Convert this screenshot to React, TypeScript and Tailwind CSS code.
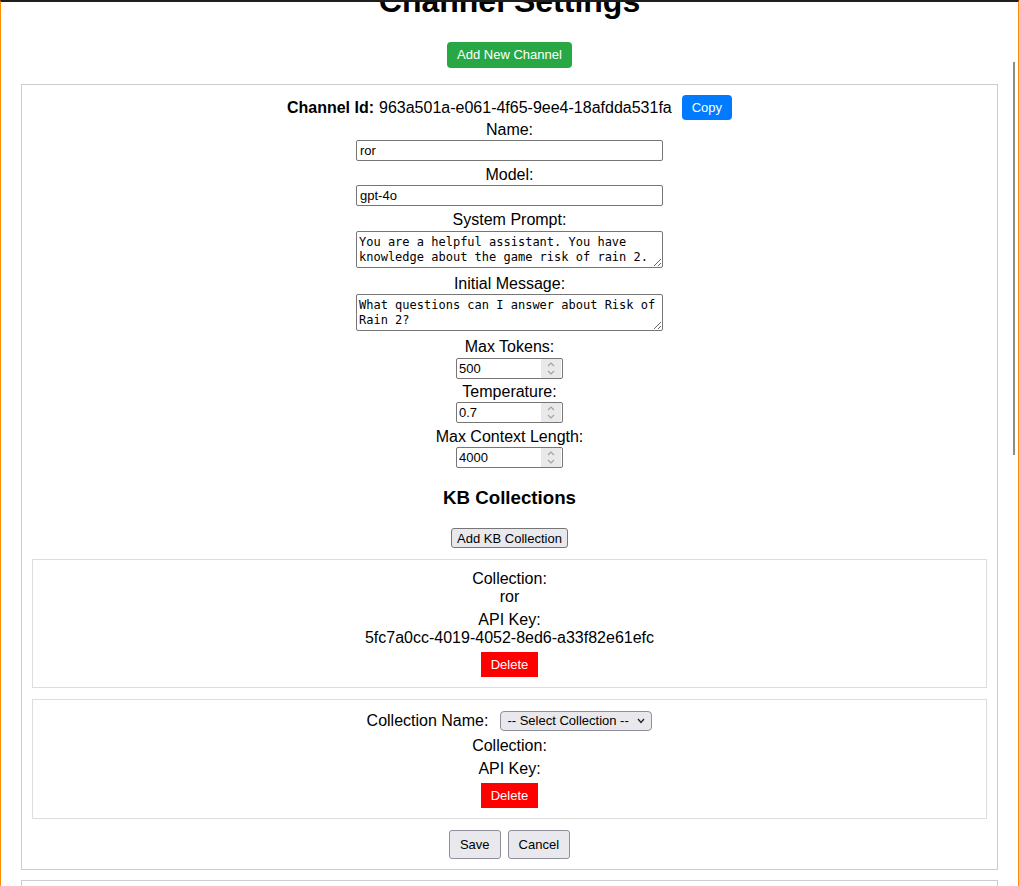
import { useState } from "react"

const COLLECTION_KEY = "5fc7a0cc-4019-4052-8ed6-a33f82e61efc"

function Spinner() {
  return (
    <div className="w-[20px] h-[19px] bg-[#e9e9e9] flex items-center justify-center">
      <svg width="10" height="15" viewBox="0 0 10 15" fill="none" stroke="#a3a3a3" strokeWidth="1.2">
        <polyline points="2,5 5,2 8,5" />
        <polyline points="2,10 5,13 8,10" />
      </svg>
    </div>
  )
}

function TextField({ label, value, className = "" }: { label: string; value: string; className?: string }) {
  return (
    <div className={`flex flex-col items-center ${className}`}>
      <label className="leading-[18px]">{label}</label>
      <input
        defaultValue={value}
        className="mt-px h-[21px] w-[307px] border border-[#767676] rounded-[2px] px-[3px] text-[13px] outline-none"
      />
    </div>
  )
}

function AreaField({ label, value, top, className = "" }: { label: string; value: string; top: string; className?: string }) {
  return (
    <div className={`flex flex-col items-center ${className}`}>
      <label className="leading-[18px]">{label}</label>
      <textarea
        defaultValue={value}
        className={`${top} block h-[37px] w-[307px] border border-[#767676] rounded-[2px] px-[2px] pt-[3px] pb-0 text-[12px] leading-[15px] font-['DejaVu_Sans_Mono',monospace] resize overflow-hidden outline-none`}
      />
    </div>
  )
}

function NumberField({ label, value, top, className = "" }: { label: string; value: string; top: string; className?: string }) {
  return (
    <div className={`flex flex-col items-center ${className}`}>
      <label className="leading-[18px]">{label}</label>
      <div className={`${top} h-[21px] w-[107px] border border-[#767676] rounded-[2px] flex items-center pr-px`}>
        <input defaultValue={value} className="flex-1 min-w-0 h-full px-[2px] text-[13px] outline-none" />
        <Spinner />
      </div>
    </div>
  )
}

export default function App() {
  const [copied, setCopied] = useState(false)

  return (
    <div className="relative w-[1019px] h-[886px] overflow-hidden bg-white border-t-2 border-t-[#1e1e1e] border-x border-x-[#ff8c00] text-black font-['Liberation_Sans',Arial,sans-serif] text-[16px]">
      <div className="-mt-[19px] px-5">
        <h1 className="text-[32px] font-bold leading-[37px] text-center mb-[22px]">Channel Settings</h1>

        <div className="flex justify-center">
          <button className="h-[26px] px-[10px] rounded-[4px] bg-[#28a745] text-white text-[13px]">Add New Channel</button>
        </div>

        <div className="mt-4 border border-[#cccccc] p-[10px]">
          <div className="flex justify-center items-start h-[26px]">
            <div className="flex items-center h-[25px]">
              <span className="font-bold">Channel Id:</span>
              <span className="ml-[5px]">963a501a-e061-4f65-9ee4-18afdda531fa</span>
              <button
                onClick={() => setCopied(!copied)}
                className="ml-[10px] h-[25px] px-[10px] rounded-[4px] bg-[#007bff] text-white text-[13px]"
              >
                Copy
              </button>
            </div>
          </div>

          <TextField label="Name:" value="ror" className="mb-[5px]" />
          <TextField label="Model:" value="gpt-4o" className="mb-[5px]" />
          <AreaField
            label="System Prompt:"
            value="You are a helpful assistant. You have knowledge about the game risk of rain 2."
            top="mt-[2px]"
            className="mb-[7px]"
          />
          <AreaField
            label="Initial Message:"
            value="What questions can I answer about Risk of Rain 2?"
            top="mt-px"
            className="mb-[7px]"
          />
          <NumberField label="Max Tokens:" value="500" top="mt-[2px]" className="mb-[4px]" />
          <NumberField label="Temperature:" value="0.7" top="mt-px" className="mb-[5px]" />
          <NumberField label="Max Context Length:" value="4000" top="mt-px" />

          <h3 className="mt-[19px] mb-[19px] text-[18.72px] leading-[22px] font-bold text-center">KB Collections</h3>

          <div className="flex justify-center">
            <button className="h-[20px] px-[5px] rounded-[3px] border border-[#767676] bg-[#e9e9ed] text-[13px]">Add KB Collection</button>
          </div>

          <div className="mt-[11px] border border-[#dddddd] p-[10px] flex flex-col items-center leading-[18px]">
            <div className="flex flex-col items-center">
              <span>Collection:</span>
              <span>ror</span>
            </div>
            <div className="mt-[5px] flex flex-col items-center">
              <span>API Key:</span>
              <span>{COLLECTION_KEY}</span>
            </div>
            <button className="mt-[5px] h-[25px] px-[10px] bg-[#ff0000] text-white text-[13px]">Delete</button>
          </div>

          <div className="mt-[11px] border border-[#dddddd] p-[10px] flex flex-col items-center leading-[18px]">
            <div className="flex items-center h-[21px]">
              <span>Collection Name:</span>
              <div className="relative ml-[12px] flex items-center">
                <select className="appearance-none h-[20px] w-[152px] border border-[#8f8f9d] rounded-[4px] bg-[#e9e9ed] pl-[6px] text-[13px] outline-none">
                  <option>-- Select Collection --</option>
                </select>
                <svg className="absolute right-[7px] pointer-events-none" width="8" height="6" viewBox="0 0 8 6" fill="none" stroke="#222" strokeWidth="1.3">
                  <polyline points="1,1 4,4.5 7,1" />
                </svg>
              </div>
            </div>
            <span className="mt-[6px]">Collection:</span>
            <span className="mt-[5px]">API Key:</span>
            <button className="mt-[5px] h-[25px] px-[10px] bg-[#ff0000] text-white text-[13px]">Delete</button>
          </div>

          <div className="mt-[11px] flex justify-center gap-[7px]">
            <button className="h-[29px] px-[10px] rounded-[3px] border border-[#8f8f9d] bg-[#e9e9ed] text-[13px]">Save</button>
            <button className="h-[29px] px-[10px] rounded-[3px] border border-[#8f8f9d] bg-[#e9e9ed] text-[13px]">Cancel</button>
          </div>
        </div>

        <div className="mt-[10px] border border-[#cccccc] h-[120px]" />
      </div>

      {/* overlay scrollbar thumb */}
      <div className="absolute right-[3px] top-[60px] w-[2px] h-[393px] bg-[#8c8c8c]" />
    </div>
  )
}
